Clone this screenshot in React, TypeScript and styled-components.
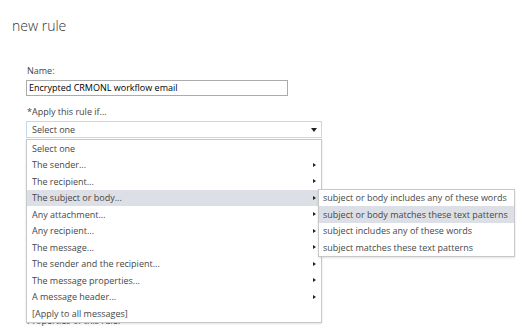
import * as React from 'react';
import styled, { createGlobalStyle } from 'styled-components';

const Global = createGlobalStyle`
  body {
    margin: 0;
    background: #ffffff;
    font-family: "Open Sans", "Noto Sans", sans-serif;
  }
`;

const Page = styled.div`
  width: 529px;
  height: 330px;
  overflow: hidden;
  padding: 18px 0 0 12px;
  box-sizing: border-box;
`;

const Title = styled.h1`
  margin: 0;
  font-size: 14px;
  font-weight: 300;
  line-height: 16px;
  color: #333333;
`;

const Form = styled.div`
  margin: 31px 0 0 14px;
  width: 296px;
`;

const Label = styled.div`
  font-size: 9px;
  line-height: 12px;
  color: #444444;
  padding-left: 1px;
`;

const TextInput = styled.div`
  width: 262px;
  height: 16px;
  box-sizing: border-box;
  border: 1px solid #ababab;
  margin: 3px 0 10px;
  padding: 0 2px;
  font-size: 9px;
  line-height: 14px;
  color: #000000;
`;

const SelectWrap = styled.div`
  position: relative;
  margin-top: 3px;
`;

const SelectBox = styled.div`
  height: 17px;
  box-sizing: border-box;
  border: 1px solid #c3d9ef;
  display: flex;
  align-items: center;
  justify-content: space-between;
  padding: 0 4px 0 5px;
  font-size: 9px;
  color: #444444;
`;

const DownArrow = styled.span`
  width: 0;
  height: 0;
  border-left: 3px solid transparent;
  border-right: 3px solid transparent;
  border-top: 4px solid #222222;
`;

const List = styled.div`
  position: absolute;
  top: 18px;
  left: 0;
  width: 296px;
  box-sizing: border-box;
  border: 1px solid #c8c8c8;
  background: #ffffff;
  box-shadow: 0 1px 2px rgba(0, 0, 0, 0.12);
  z-index: 2;
`;

const Item = styled.div<{ $active?: boolean }>`
  position: relative;
  height: 16.5px;
  display: flex;
  align-items: center;
  justify-content: space-between;
  padding: 0 5px 0 5px;
  font-size: 9px;
  color: #474747;
  background: ${(p) => (p.$active ? '#dcdfe5' : 'transparent')};
`;

const RightArrow = styled.span`
  width: 0;
  height: 0;
  border-top: 2.5px solid transparent;
  border-bottom: 2.5px solid transparent;
  border-left: 3px solid #222222;
`;

const SubMenu = styled.div`
  position: absolute;
  top: -1px;
  left: 291px;
  width: 197px;
  box-sizing: border-box;
  border: 1px solid #c8c8c8;
  background: #ffffff;
  box-shadow: 0 1px 2px rgba(0, 0, 0, 0.12);
`;

const SubItem = styled.div<{ $active?: boolean }>`
  height: 16.5px;
  display: flex;
  align-items: center;
  padding: 0 4px;
  font-size: 9px;
  color: #474747;
  background: ${(p) => (p.$active ? '#dcdfe5' : 'transparent')};
`;

const Section = styled.div`
  margin-top: 177px;
  font-size: 9px;
  line-height: 12px;
  color: #444444;
  padding-left: 1px;
`;

const items = [
  { label: 'Select one', sub: false },
  { label: 'The sender...', sub: true },
  { label: 'The recipient...', sub: true },
  { label: 'The subject or body...', sub: true },
  { label: 'Any attachment...', sub: true },
  { label: 'Any recipient...', sub: true },
  { label: 'The message...', sub: true },
  { label: 'The sender and the recipient...', sub: true },
  { label: 'The message properties...', sub: true },
  { label: 'A message header...', sub: true },
  { label: '[Apply to all messages]', sub: false },
];

const subItems = [
  'subject or body includes any of these words',
  'subject or body matches these text patterns',
  'subject includes any of these words',
  'subject matches these text patterns',
];

export default function App() {
  return (
    <Page>
      <Global />
      <Title>new rule</Title>
      <Form>
        <Label>Name:</Label>
        <TextInput>Encrypted CRMONL workflow email</TextInput>
        <Label>*Apply this rule if...</Label>
        <SelectWrap>
          <SelectBox>
            <span>Select one</span>
            <DownArrow />
          </SelectBox>
          <List>
            {items.map((it, i) => (
              <Item key={it.label} $active={i === 3}>
                <span>{it.label}</span>
                {it.sub && <RightArrow />}
                {i === 3 && (
                  <SubMenu>
                    {subItems.map((s, j) => (
                      <SubItem key={s} $active={j === 1}>
                        {s}
                      </SubItem>
                    ))}
                  </SubMenu>
                )}
              </Item>
            ))}
          </List>
        </SelectWrap>
        <Section>Properties of this rule:</Section>
      </Form>
    </Page>
  );
}
